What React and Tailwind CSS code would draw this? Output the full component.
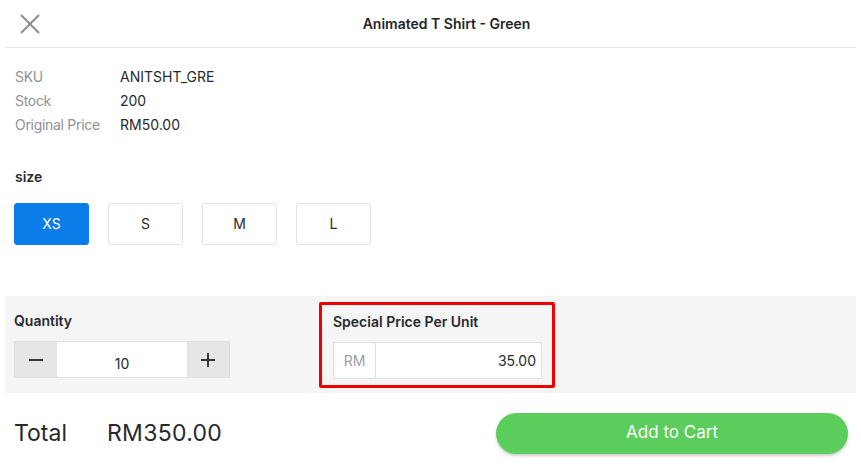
import React, { useState } from "react";

const sizes = ["XS", "S", "M", "L"];

const App = () => {
  const [size, setSize] = useState("XS");
  const [qty, setQty] = useState(10);

  return (
    <div className="w-[861px] h-[471px] bg-white px-[5px] overflow-hidden" style={{ fontFamily: "Inter, 'Liberation Sans', sans-serif" }}>
      <div className="relative h-[48px] flex items-center justify-center border-b border-[#e3e3e3]">
        <button className="absolute left-[15px] top-[14px] w-[20px] h-[20px]">
          <svg viewBox="0 0 20 20" className="w-[20px] h-[20px]" fill="none" stroke="#8a8d90" strokeWidth="2">
            <path d="M1 1L19 19M19 1L1 19" />
          </svg>
        </button>
        <div className="pl-[32px] text-[14px] font-semibold text-[#1e252b]">Animated T Shirt - Green</div>
      </div>

      <div className="px-[10px] pt-[17px] text-[14px] leading-[24px]">
        <div className="flex"><span className="w-[105px] text-[#8e9297] tracking-[-0.3px]">SKU</span><span className="text-[#262a2e]">ANITSHT_GRE</span></div>
        <div className="flex"><span className="w-[105px] text-[#8e9297] tracking-[-0.3px]">Stock</span><span className="text-[#262a2e]">200</span></div>
        <div className="flex"><span className="w-[105px] text-[#8e9297] tracking-[-0.3px]">Original Price</span><span className="text-[#262a2e]">RM50.00</span></div>

        <div className="mt-[28px] font-semibold text-[#262a2e]">size</div>
        <div className="flex gap-[19px] mt-[14px] -ml-[1px]">
          {sizes.map((s) => (
            <button
              key={s}
              onClick={() => setSize(s)}
              className={
                size === s
                  ? "w-[75px] h-[42px] rounded-[3px] bg-[#0a7de8] text-white text-[14px] border border-[#0a7de8]"
                  : "w-[75px] h-[42px] rounded-[3px] bg-white text-[#262a2e] text-[14px] border border-[#e2e2e2]"
              }
            >
              {s}
            </button>
          ))}
        </div>
      </div>

      <div className="mt-[51px] h-[97px] bg-[#f5f5f5] flex px-[9px]">
        <div className="w-[305px] pt-[15px]">
          <div className="text-[14px] font-semibold text-[#262a2e] leading-[20px]">Quantity</div>
          <div className="flex mt-[10px] h-[37px] w-[216px] border border-[#e0e0e0]">
            <button onClick={() => setQty(Math.max(1, qty - 1))} className="w-[42px] bg-[#e6e6e6] flex items-center justify-center">
              <svg viewBox="0 0 16 16" className="w-[16px] h-[16px]" stroke="#333" strokeWidth="2"><path d="M1 8H15" /></svg>
            </button>
            <div className="flex-1 bg-white flex items-end justify-center pb-[3px] text-[14px] text-[#262a2e]">{qty}</div>
            <button onClick={() => setQty(qty + 1)} className="w-[42px] bg-[#e6e6e6] flex items-center justify-center">
              <svg viewBox="0 0 16 16" className="w-[16px] h-[16px]" stroke="#333" strokeWidth="2"><path d="M1 8H15M8 1V15" /></svg>
            </button>
          </div>
        </div>
        <div className="mt-[6px] h-[86px] w-[236px] border-[3px] border-[#f00000] rounded-[2px] pt-[7px] px-[11px]">
          <div className="text-[14px] font-semibold text-[#262a2e] leading-[20px]">Special Price Per Unit</div>
          <div className="flex mt-[10px] h-[37px] w-[209px] border border-[#e0e0e0] bg-white">
            <div className="w-[42px] border-r border-[#e0e0e0] flex items-center justify-center text-[14px] text-[#9aa0a5]">RM</div>
            <div className="flex-1 flex items-center justify-end pr-[5px] text-[14px] text-[#262a2e]">35.00</div>
          </div>
        </div>
      </div>

      <div className="flex items-center h-[80px] pl-[9px] pr-[8px]">
        <div className="w-[93px] text-[23px] text-[#262a2e]">Total</div>
        <div className="text-[23px] text-[#262a2e] tracking-[0.3px]">RM350.00</div>
        <button className="ml-auto w-[352px] h-[41px] rounded-full bg-[#5acd5d] text-white text-[17px] shadow-[0_2px_3px_rgba(0,0,0,0.2)]">
          Add to Cart
        </button>
      </div>
    </div>
  );
};

export default App;
